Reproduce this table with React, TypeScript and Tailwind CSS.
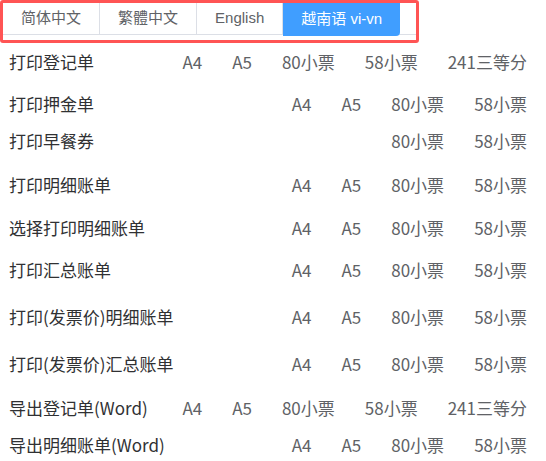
const tabs = ["简体中文", "繁體中文", "English", "越南语 vi-vn"];

type Row = { label: string; opts: string[]; h: string };

const rows: Row[] = [
  { label: "打印登记单", opts: ["A4", "A5", "80小票", "58小票", "241三等分"], h: "mt-[7px]" },
  { label: "打印押金单", opts: ["A4", "A5", "80小票", "58小票"], h: "mt-[18px]" },
  { label: "打印早餐券", opts: ["80小票", "58小票"], h: "mt-[13px]" },
  { label: "打印明细账单", opts: ["A4", "A5", "80小票", "58小票"], h: "mt-[20px]" },
  { label: "选择打印明细账单", opts: ["A4", "A5", "80小票", "58小票"], h: "mt-[19px]" },
  { label: "打印汇总账单", opts: ["A4", "A5", "80小票", "58小票"], h: "mt-[18px]" },
  { label: "打印(发票价)明细账单", opts: ["A4", "A5", "80小票", "58小票"], h: "mt-[23px]" },
  { label: "打印(发票价)汇总账单", opts: ["A4", "A5", "80小票", "58小票"], h: "mt-[23px]" },
  { label: "导出登记单(Word)", opts: ["A4", "A5", "80小票", "58小票", "241三等分"], h: "mt-[20px]" },
  { label: "导出明细账单(Word)", opts: ["A4", "A5", "80小票", "58小票"], h: "mt-[13px]" },
];

export default function App() {
  return (
    <div className="h-[461px] w-[546px] overflow-hidden bg-white">
      <div className="inline-flex h-[43px] w-[419px] flex-col rounded-[3px] border-[3px] border-[#ff5454]">
        <div className="flex h-[32px] border-b border-[#dcdfe6] font-['Liberation_Sans','Noto_Sans_CJK_SC',sans-serif] text-[15px]">
          {tabs.map((t, i) =>
            i === tabs.length - 1 ? (
              <div
                key={t}
                className="-mb-px flex h-[33px] items-center rounded-br-[4px] bg-[#409eff] px-[18px] text-white"
              >
                {t}
              </div>
            ) : (
              <div
                key={t}
                className="flex items-center border-r border-[#dcdfe6] px-[18px] text-[#606266]"
              >
                {t}
              </div>
            )
          )}
        </div>
      </div>

      <div className="font-['Noto_Sans_CJK_SC',sans-serif] text-[17px]">
        {rows.map((r) => (
          <div key={r.label} className={`flex h-[24px] items-center justify-between pl-[9px] pr-[19px] ${r.h}`}>
            <span className="text-[#303133]">{r.label}</span>
            <div className="flex gap-[30px] text-[#606266]">
              {r.opts.map((o) => (
                <span key={o}>{o}</span>
              ))}
            </div>
          </div>
        ))}
      </div>
    </div>
  );
}
